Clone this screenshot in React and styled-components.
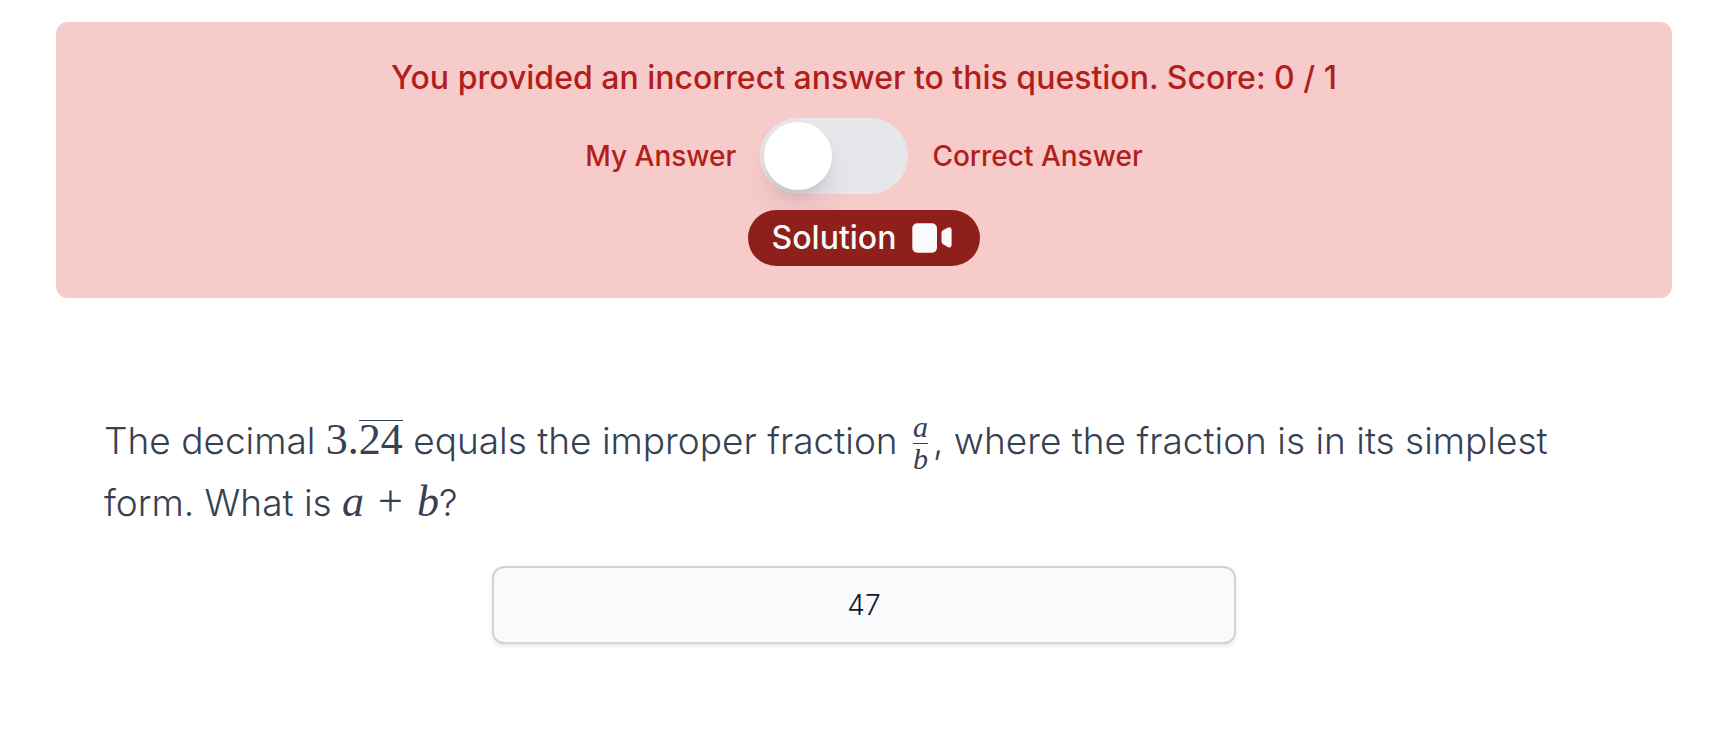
import React, { useState } from 'react';
import styled, { createGlobalStyle } from 'styled-components';


const App = () => {
  const [showCorrect, setShowCorrect] = useState(false);
  const [answer, setAnswer] = useState('47');

  return (
    <>
      <GlobalStyle />
      <Page>
        <ResultPanel>
          <ResultText>
            You provided an incorrect answer to this question. Score: 0 / 1
          </ResultText>
          <ToggleRow>
            <ToggleLabel htmlFor="answer-toggle">My Answer</ToggleLabel>
            <Toggle
              type="checkbox"
              id="answer-toggle"
              checked={showCorrect}
              onChange={(e) => setShowCorrect(e.target.checked)}
            />
            <ToggleLabel htmlFor="answer-toggle">Correct Answer</ToggleLabel>
          </ToggleRow>
          <SolutionButton type="button">
            <ButtonText>Solution</ButtonText>
            <VideoIcon />
          </SolutionButton>
        </ResultPanel>

        <Question>
          <QuestionText id="question-text">
            The decimal <MathText>3.<Repeating>24</Repeating></MathText> equals the
            improper fraction{' '}
            <Fraction>
              <Numerator>a</Numerator>
              <Denominator>b</Denominator>
            </Fraction>
            , where the fraction is in its simplest form. What is{' '}
            <MathText>
              <Variable>a</Variable>
              <Operator>+</Operator>
              <Variable>b</Variable>
            </MathText>
            ?
          </QuestionText>
          <AnswerInput
            type="text"
            aria-labelledby="question-text"
            value={answer}
            onChange={(e) => setAnswer(e.target.value)}
          />
        </Question>
      </Page>
    </>
  );
};

const VideoIcon = () => (
  <svg width="48" height="32" viewBox="0 0 48 32" fill="currentColor" aria-hidden="true">
    <rect x="4.3" y="1.2" width="24.7" height="29.6" rx="5" />
    <path d="M33.5 11 Q33.5 8.9 35.2 7.9 L40.2 5.6 Q43.6 4.6 43.6 8 V23 Q43.6 26.2 40.2 25.2 L35.2 22.3 Q33.5 21.3 33.5 19.4 Z" />
  </svg>
);

export default App;

const GlobalStyle = createGlobalStyle`
  * {
    box-sizing: border-box;
  }

  body {
    margin: 0;
    background-color: #fff;
    font-family: Inter, sans-serif;
  }
`;

const Page = styled.main`
  padding: 22px 64px 64px 56px;
`;

const ResultPanel = styled.section`
  display: flex;
  flex-direction: column;
  align-items: center;
  padding: 32px;
  border-radius: 12px;
  background-color: #f8cbcb;
  color: #b21e1b;
`;

const ResultText = styled.p`
  margin: 0 0 16px;
  font-size: 32px;
  font-weight: 500;
  line-height: 48px;
  text-align: center;
`;

const ToggleRow = styled.div`
  display: flex;
  align-items: center;
  justify-content: center;
  gap: 24px;
  margin-bottom: 16px;
`;

const ToggleLabel = styled.label`
  font-size: 28px;
  font-weight: 500;
  line-height: 40px;
  cursor: pointer;
`;

const Toggle = styled.input`
  appearance: none;
  display: flex;
  flex-shrink: 0;
  width: 148px;
  height: 76px;
  margin: 0;
  padding: 4px;
  border-radius: 38px;
  background-color: #e5e7eb;
  cursor: pointer;

  &::before {
    content: '';
    width: 68px;
    height: 68px;
    border-radius: 50%;
    background-color: #fff;
    box-shadow: 0 20px 32px -4px rgba(0, 0, 0, 0.1), 0 8px 12px -4px rgba(0, 0, 0, 0.1);
  }

  &:checked {
    justify-content: flex-end;
  }
`;

const SolutionButton = styled.button`
  display: flex;
  align-items: center;
  gap: 12px;
  height: 56px;
  padding: 0 24px;
  border: none;
  border-radius: 28px;
  background-color: #8f1f1b;
  color: #f9fafb;
  font-family: inherit;
  font-size: 32px;
  font-weight: 500;
  cursor: pointer;
`;

const ButtonText = styled.span`
  padding-bottom: 2px;
`;

const Question = styled.section`
  display: flex;
  flex-direction: column;
  align-items: center;
  margin-top: 112px;
  padding: 0 48px;
`;

const QuestionText = styled.p`
  width: 100%;
  margin: 0 0 32px;
  color: #374151;
  font-size: 37px;
  font-weight: 300;
  line-height: 62px;
`;

const MathText = styled.span`
  font-family: "Liberation Serif", serif;
  font-size: 44px;
  font-weight: 400;
  line-height: 1;
  white-space: nowrap;
`;

const Repeating = styled.span`
  display: inline-block;
  border-top: 1px solid currentColor;
  line-height: 38px;
`;

const Variable = styled.i`
  font-style: italic;
`;

const Operator = styled.span`
  margin: 0 14px;
`;

const Fraction = styled.span`
  display: inline-flex;
  flex-direction: column;
  align-items: center;
  margin: 0 5px;
  vertical-align: 17px;
  font-family: "Liberation Serif", serif;
  font-size: 30px;
  font-style: italic;
  font-weight: 400;
`;

const Numerator = styled.span`
  padding-bottom: 3px;
  line-height: 26px;
`;

const Denominator = styled.span`
  padding-top: 3px;
  border-top: 1px solid currentColor;
  line-height: 24px;
`;

const AnswerInput = styled.input`
  width: calc(50% - 16px);
  height: 78px;
  padding: 0 16px;
  border: 2px solid #d2d4dd;
  border-radius: 12px;
  background-color: #f9fafc;
  box-shadow: 0 2px 4px rgba(0, 0, 0, 0.1);
  color: #111827;
  font-family: inherit;
  font-size: 28px;
  font-weight: 300;
  text-align: center;
`;
